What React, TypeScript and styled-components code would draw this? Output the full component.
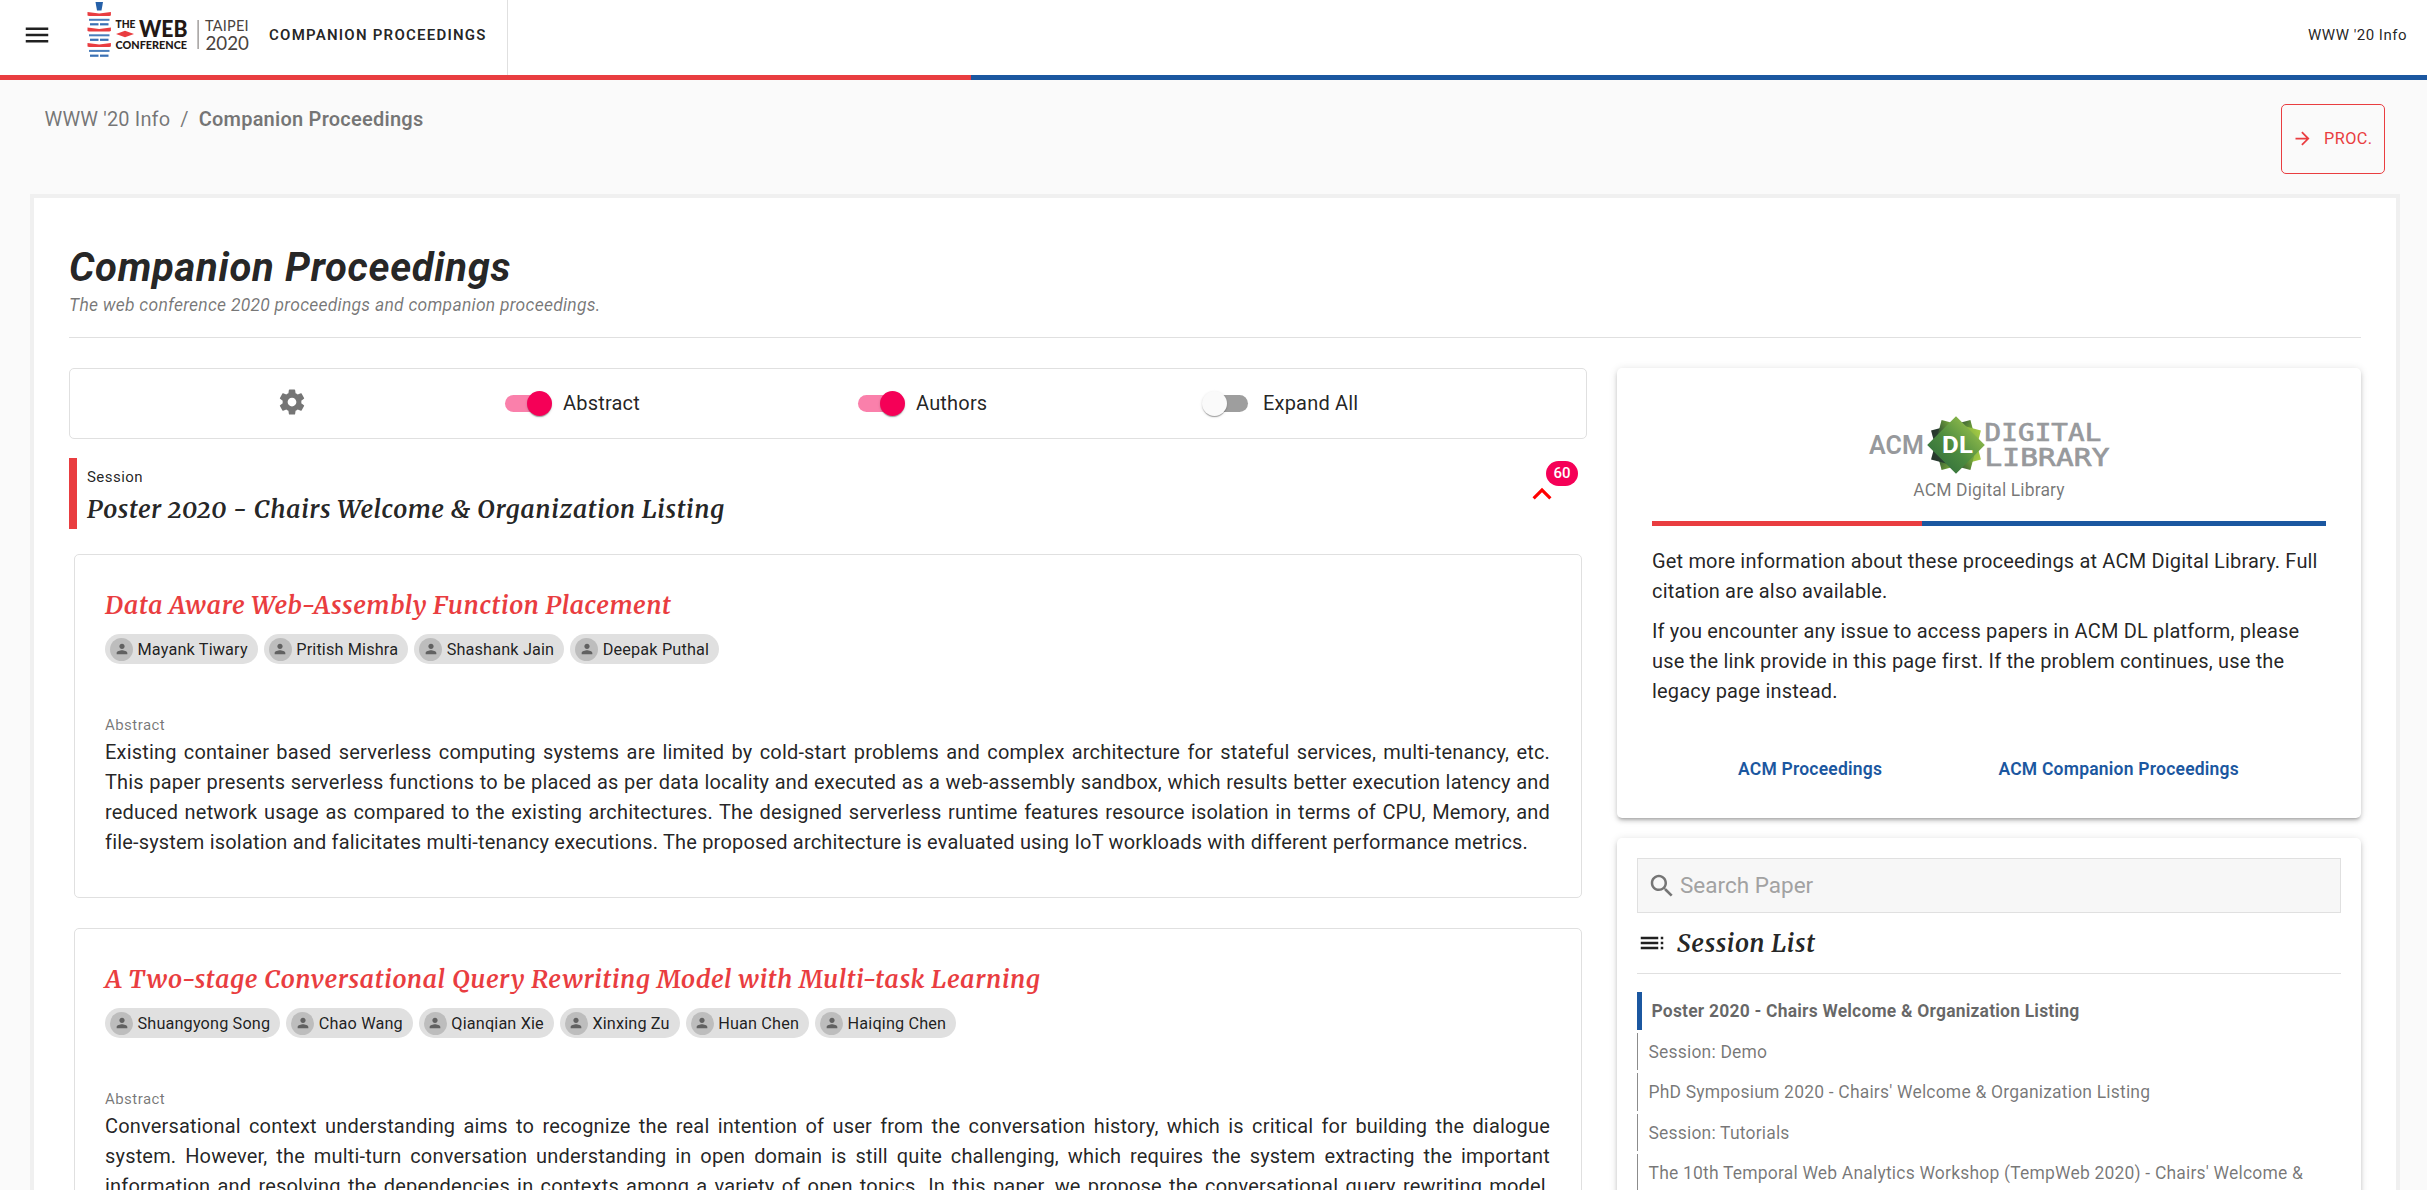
import React from 'react';
import styled, { createGlobalStyle, css } from 'styled-components';

const RED = '#e93d40';
const BLUE = '#1b57a0';
const PINK = '#f50057';
const INK = 'rgba(0,0,0,0.87)';
const MUTED = 'rgba(0,0,0,0.54)';
const LINE = '#e0e0e0';
const SANS = 'Roboto, "Liberation Sans", sans-serif';
const SERIF = 'Merriweather, "DejaVu Serif Condensed", "DejaVu Serif", serif';

const Global = createGlobalStyle`
  *, *::before, *::after { box-sizing: border-box; }
  html, body { margin: 0; height: 100%; overflow: hidden; }
  body { background: #fafafa; font-family: ${SANS}; color: ${INK}; font-size: 20px; }
  h1, h2, p, ul { margin: 0; padding: 0; font-weight: 400; }
  svg { display: block; flex: none; }
`;

const Page = styled.div`
  height: 1190px;
  overflow: hidden;
`;

const Header = styled.header`
  height: 75px;
  background: #fff;
  display: flex;
  align-items: stretch;
  justify-content: space-between;
`;

const Brand = styled.div`
  display: flex;
  align-items: center;
  width: 508px;
  padding: 0 0 5px 22px;
  border-right: 1px solid ${LINE};
  white-space: nowrap;
`;

const LogoSlot = styled.div`
  width: 170px;
  height: 60px;
  margin: 0 14px 10px 33px;
`;

const BrandTitle = styled.span`
  font-size: 15px;
  font-weight: 600;
  line-height: 25px;
  letter-spacing: 1.24px;
`;

const HeaderLink = styled.a`
  font-size: 15px;
  line-height: 25px;
  letter-spacing: 0.5px;
  padding: 23px 20px 0 0;
`;

const Stripe = styled.div`
  height: 5px;
  background: linear-gradient(90deg, ${RED} 40%, ${BLUE} 40%);
`;

const Crumbs = styled.div`
  display: flex;
  justify-content: space-between;
  align-items: flex-start;
  height: 114px;
  padding: 24px 42px 0 44.5px;
`;

const CrumbTrail = styled.nav`
  display: flex;
  gap: 10px;
  line-height: 30px;
  letter-spacing: 0.15px;
  color: ${MUTED};
  b { font-weight: 600; letter-spacing: 0.23px; }
`;

const ProcButton = styled.button`
  width: 104px;
  height: 70px;
  display: flex;
  align-items: center;
  gap: 11px;
  padding: 0 0 1px 10px;
  background: transparent;
  border: 1px solid ${RED};
  border-radius: 5px;
  color: ${RED};
  font: 400 16.25px ${SANS};
  letter-spacing: 0.46px;
`;

const Sheet = styled.main`
  margin: 0 27px 0 30px;
  height: 1100px;
  background: #fff;
  border: 4px solid #f0f0f0;
  padding: 45px 35px 0;
`;

const Title = styled.h1`
  font-size: 40px;
  line-height: 50px;
  font-style: italic;
  font-weight: 700;
  letter-spacing: 0.7px;
`;

const Subtitle = styled.p`
  font-size: 17.5px;
  line-height: 25px;
  font-style: italic;
  letter-spacing: 0.25px;
  color: ${MUTED};
  height: 44px;
`;

const Rule = styled.div`
  height: 1px;
  background: ${LINE};
`;

const Columns = styled.div`
  display: flex;
  justify-content: space-between;
  padding-top: 30px;
`;

const MainColumn = styled.section`
  width: 1518px;
`;

const SideColumn = styled.aside`
  width: 744px;
  display: flex;
  flex-direction: column;
  gap: 20px;
`;

const Toolbar = styled.div`
  display: grid;
  grid-template-columns: 433px 353px 347px 1fr;
  align-items: center;
  height: 71px;
  border: 1px solid ${LINE};
  border-radius: 5px;
`;

const GearSlot = styled.div`
  padding: 0 0 4px 207px;
`;

const Option = styled.label`
  display: flex;
  align-items: center;
  gap: 11px;
  line-height: 30px;
  letter-spacing: 0.19px;
`;

const OptionText = styled.span`
  padding-bottom: 2px;
`;

const Track = styled.span<{ $on: boolean }>`
  display: flex;
  align-items: center;
  width: 43px;
  height: 17px;
  margin: 0 4px 0 2px;
  border-radius: 9px;
  background: ${p => (p.$on ? '#fa80ab' : '#9e9e9e')};
`;

const Thumb = styled.span<{ $on: boolean }>`
  flex: none;
  width: 25px;
  height: 25px;
  border-radius: 50%;
  margin-left: ${p => (p.$on ? '22px' : '-3px')};
  background: ${p => (p.$on ? PINK : '#fafafa')};
  box-shadow: 0 2px 1px -1px rgba(0,0,0,.2), 0 1px 1px rgba(0,0,0,.14), 0 1px 3px rgba(0,0,0,.12);
`;

const SessionHead = styled.div`
  display: flex;
  justify-content: space-between;
  height: 71px;
  margin: 19px 0 25px;
  padding: 6px 0 0 10px;
  border-left: 8px solid ${RED};
`;

const Overline = styled.div<{ $muted?: boolean }>`
  font-size: 15px;
  line-height: 26px;
  letter-spacing: 0.45px;
  ${p => p.$muted && css`color: ${MUTED}; line-height: 23px;`}
`;

const SerifHeading = styled.h2<{ $red?: boolean }>`
  font-family: ${SERIF};
  font-style: italic;
  font-weight: 600;
  font-size: 25px;
  line-height: 38px;
  font-variant-numeric: oldstyle-nums;
  white-space: nowrap;
  letter-spacing: 0.58px;
  ${p => p.$red && css`color: ${RED};`}
`;

const CountToggle = styled.div`
  position: relative;
  width: 38px;
  height: 38px;
  margin: 11px 26px 0 0;
`;

const Badge = styled.span`
  position: absolute;
  left: 23px;
  top: -14px;
  width: 32px;
  height: 25px;
  border-radius: 13px;
  background: ${PINK};
  color: #fff;
  font-size: 15px;
  font-weight: 500;
  line-height: 25px;
  text-align: center;
`;

const PaperCard = styled.article`
  height: 344px;
  margin: 0 5px 30px;
  padding: 31px 30px 0;
  border: 1px solid ${LINE};
  border-radius: 5px;
`;

const Chips = styled.div`
  display: flex;
  gap: 6px;
  margin: 10px 0 50px;
`;

const Chip = styled.span`
  display: flex;
  align-items: center;
  height: 30px;
  padding: 0 10px 0 5px;
  border-radius: 15px;
  background: #e0e0e0;
  font-size: 16.25px;
  letter-spacing: 0.15px;
  white-space: nowrap;
`;

const Avatar = styled.span`
  width: 23px;
  height: 23px;
  margin-right: 4.5px;
  border-radius: 50%;
  background: #bdbdbd;
  display: flex;
  align-items: center;
  justify-content: center;
`;

const Abstract = styled.p<{ $continues?: boolean }>`
  width: 1445px;
  line-height: 30px;
  letter-spacing: 0.18px;
  text-align: justify;
  ${p => p.$continues && css`text-align-last: justify;`}
`;

const Raised = styled.section<{ $h: number; $pad: string }>`
  height: ${p => p.$h}px;
  padding: ${p => p.$pad};
  background: #fff;
  border-radius: 5px;
  box-shadow: 0 3px 3px -2px rgba(0,0,0,.2), 0 3px 4px rgba(0,0,0,.14), 0 1px 8px rgba(0,0,0,.12);
`;

const LibraryHead = styled.div`
  display: flex;
  flex-direction: column;
  align-items: center;
  gap: 3px;
  height: 106px;
  color: ${MUTED};
  font-size: 17.5px;
  line-height: 25px;
  letter-spacing: 0.13px;
`;

const Notes = styled.div`
  display: flex;
  flex-direction: column;
  gap: 10px;
  padding-top: 20px;
`;

const Copy = styled.p`
  line-height: 30px;
  letter-spacing: 0.17px;
  white-space: nowrap;
`;

const LinkRow = styled.div`
  display: flex;
  justify-content: space-between;
  padding: 51px 87px 0 86px;
  color: ${BLUE};
  font-size: 17.5px;
  font-weight: 600;
  line-height: 25px;
  letter-spacing: 0.22px;
`;

const SearchBox = styled.div`
  display: flex;
  align-items: center;
  gap: 3px;
  height: 55px;
  padding-left: 9px;
  background: #f7f7f7;
  border: 1px solid ${LINE};
  color: #a2a2a2;
  font-size: 22.5px;
`;

const SearchHint = styled.span`
  padding-bottom: 2px;
`;

const ListHead = styled.div`
  display: flex;
  align-items: center;
  gap: 10px;
  height: 60px;
`;

const SessionList = styled.ul`
  list-style: none;
  display: flex;
  flex-direction: column;
  gap: 3px;
  padding-top: 18px;
`;

const SessionItem = styled.li<{ $active?: boolean }>`
  height: 37.5px;
  flex: none;
  padding: 7px 0 0 10.5px;
  border-left: 1px solid #8c8c8c;
  color: ${MUTED};
  font-size: 17.5px;
  line-height: 25px;
  letter-spacing: 0.19px;
  white-space: nowrap;
  ${p => p.$active && css`
    border-left: 5px solid ${BLUE};
    padding-left: 9.5px;
    font-weight: 700;
    color: rgba(0,0,0,0.6);
  `}
`;

const Icon = ({ d, size, color = 'currentColor' }: { d: string; size: number; color?: string }) => (
  <svg width={size} height={size} viewBox="0 0 24 24" fill={color}><path d={d} /></svg>
);

const ICONS = {
  menu: 'M3 18h18v-2H3v2zm0-5h18v-2H3v2zm0-7v2h18V6H3z',
  arrow: 'M12 4l-1.41 1.41L16.17 11H4v2h12.17l-5.58 5.59L12 20l8-8z',
  gear: 'M19.43 12.98c.04-.32.07-.64.07-.98s-.03-.66-.07-.98l2.11-1.65c.19-.15.24-.42.12-.64l-2-3.46c-.12-.22-.39-.3-.61-.22l-2.49 1c-.52-.4-1.08-.73-1.69-.98l-.38-2.65C14.46 2.18 14.25 2 14 2h-4c-.25 0-.46.18-.49.42l-.38 2.65c-.61.25-1.17.59-1.69.98l-2.49-1c-.23-.09-.49 0-.61.22l-2 3.46c-.13.22-.07.49.12.64l2.11 1.65c-.04.32-.07.65-.07.98s.03.66.07.98l-2.11 1.65c-.19.15-.24.42-.12.64l2 3.46c.12.22.39.3.61.22l2.49-1c.52.4 1.08.73 1.69.98l.38 2.65c.03.24.24.42.49.42h4c.25 0 .46-.18.49-.42l.38-2.65c.61-.25 1.17-.59 1.69-.98l2.49 1c.23.09.49 0 .61-.22l2-3.46c.12-.22.07-.49-.12-.64l-2.11-1.65zM12 15.5c-1.93 0-3.5-1.57-3.5-3.5s1.57-3.5 3.5-3.5 3.5 1.57 3.5 3.5-1.57 3.5-3.5 3.5z',
  up: 'M12 8l-6 6 1.41 1.41L12 10.83l4.59 4.58L18 14z',
  person: 'M12 12c2.21 0 4-1.79 4-4s-1.79-4-4-4-4 1.79-4 4 1.79 4 4 4zm0 2c-2.67 0-8 1.34-8 4v2h16v-2c0-2.66-5.33-4-8-4z',
  search: 'M15.5 14h-.79l-.28-.27C15.41 12.59 16 11.11 16 9.5 16 5.91 13.09 3 9.5 3S3 5.91 3 9.5 5.91 16 9.5 16c1.61 0 3.09-.59 4.23-1.57l.27.28v.79l5 4.99L20.49 19l-4.99-5zm-6 0C7.01 14 5 11.99 5 9.5S7.01 5 9.5 5 14 7.01 14 9.5 11.99 14 9.5 14z',
  toc: 'M3 9h14V7H3v2zm0 4h14v-2H3v2zm0 4h14v-2H3v2zm16 0h2v-2h-2v2zm0-10v2h2V7h-2zm0 6h2v-2h-2v2z',
};

const WebConfLogo = () => (
  <svg width="170" height="60" viewBox="0 0 170 60">
    <path d="M10.5 2h7.5l-1.5 8.500h-4.500z" fill="#2560a8" />
    {[12, 27.500, 43].map(y => (
      <path key={y} d={`M2.500 ${y}l11.700 1.500l11.700 -1.500v3.500l-1.500 .5h-20.400l-1.500 -.5z`} fill={RED} />
    ))}
    {[18.800, 34.300, 49.900].map(y => (
      <rect key={y} x="4" y={y} width="20.500" height="2" fill="#4a7dbb" />
    ))}
    {[23.200, 38.700, 54.600].map(y => (
      <g key={y} fill="#3a70b4"><rect x="5" y={y} width="8.500" height="2.200" /><rect x="15" y={y} width="8.500" height="2.200" /></g>
    ))}
    <path d="M31 34l9-3.300 9 3.300-9 3.300z" fill={RED} />
    <g fill="#231815" fontFamily="Lato, sans-serif" fontWeight="900">
      <text x="30.500" y="28" fontSize="10.500" textLength="20" lengthAdjust="spacingAndGlyphs">THE</text>
      <text x="54" y="36.500" fontSize="22.500" textLength="48.500" lengthAdjust="spacingAndGlyphs">WEB</text>
      <text x="30.500" y="48.700" fontSize="11" textLength="71.500" lengthAdjust="spacingAndGlyphs">CONFERENCE</text>
    </g>
    <rect x="112.500" y="20" width="1.200" height="29" fill="#8b8785" />
    <g fill="#4a4340" fontFamily="Lato, sans-serif">
      <text x="120" y="30.700" fontSize="14.500" textLength="43.500" lengthAdjust="spacing">TAIPEI</text>
      <text x="120.500" y="50" fontSize="19.500" textLength="43.500" lengthAdjust="spacingAndGlyphs">2020</text>
    </g>
  </svg>
);

const star = (angle: number) => `rotate(${angle} 88 30)`;

const AcmLogo = () => (
  <svg width="243" height="60" viewBox="0 0 243 60">
    <defs>
      <linearGradient id="acmFront" x1="0" y1="1" x2="1" y2="0">
        <stop offset="0.1" stopColor="#2f6b3c" /><stop offset="0.45" stopColor="#4b8a3f" /><stop offset="1" stopColor="#b2d250" />
      </linearGradient>
      <linearGradient id="acmBack" gradientUnits="userSpaceOnUse" x1="60" y1="0" x2="116" y2="0">
        <stop offset="0" stopColor="#26352c" /><stop offset="0.3" stopColor="#2b4a33" /><stop offset="0.6" stopColor="#6fa03a" /><stop offset="1" stopColor="#a5cb45" />
      </linearGradient>
    </defs>
    <g fill="url(#acmBack)">
      <path d="M88 1.200L116.800 30L88 58.800L59.200 30z" transform={star(30)} />
      <path d="M88 1.200L116.800 30L88 58.800L59.200 30z" transform={star(-30)} />
    </g>
    <path d="M88 1.200L116.800 30L88 58.800L59.200 30z" fill="url(#acmFront)" />
    <g fill="#97999c" fontFamily="Roboto, sans-serif" fontWeight="600">
      <text x="1" y="38.800" fontSize="25.500" textLength="55" lengthAdjust="spacingAndGlyphs">ACM</text>
    </g>
    <text x="74" y="38" fill="#fff" fontFamily="Roboto, sans-serif" fontWeight="700" fontSize="23" textLength="31" lengthAdjust="spacingAndGlyphs">DL</text>
    <g fill="#97999c" stroke="#97999c" strokeWidth="0.700" fontFamily="DejaVu Sans Mono, monospace" fontSize="24">
      <text x="116.500" y="25.800" textLength="117" lengthAdjust="spacingAndGlyphs">DIGITAL</text>
      <text x="116.500" y="50.800" textLength="125" lengthAdjust="spacingAndGlyphs">LIBRARY</text>
    </g>
  </svg>
);

const Switch = ({ on, label }: { on: boolean; label: string }) => (
  <Option><Track $on={on}><Thumb $on={on} /></Track><OptionText>{label}</OptionText></Option>
);

const Paper = ({ title, authors, text, continues }: { title: string; authors: string[]; text: string; continues?: boolean }) => (
  <PaperCard>
    <SerifHeading $red>{title}</SerifHeading>
    <Chips>
      {authors.map(a => (
        <Chip key={a}><Avatar><Icon d={ICONS.person} size={16} color="#616161" /></Avatar>{a}</Chip>
      ))}
    </Chips>
    <Overline $muted>Abstract</Overline>
    <Abstract $continues={continues}>{text}</Abstract>
  </PaperCard>
);

const sessions = [
  'Poster 2020 - Chairs Welcome & Organization Listing',
  'Session: Demo',
  "PhD Symposium 2020 - Chairs' Welcome & Organization Listing",
  'Session: Tutorials',
  "The 10th Temporal Web Analytics Workshop (TempWeb 2020) - Chairs' Welcome &",
];

export default function App() {
  return (
    <Page>
      <Global />
      <Header>
        <Brand>
          <Icon d={ICONS.menu} size={30} />
          <LogoSlot><WebConfLogo /></LogoSlot>
          <BrandTitle>COMPANION PROCEEDINGS</BrandTitle>
        </Brand>
        <HeaderLink>WWW '20 Info</HeaderLink>
      </Header>
      <Stripe />
      <Crumbs>
        <CrumbTrail><span>WWW '20 Info</span><span>/</span><b>Companion Proceedings</b></CrumbTrail>
        <ProcButton><Icon d={ICONS.arrow} size={21} />PROC.</ProcButton>
      </Crumbs>
      <Sheet>
        <Title>Companion Proceedings</Title>
        <Subtitle>The web conference 2020 proceedings and companion proceedings.</Subtitle>
        <Rule />
        <Columns>
          <MainColumn>
            <Toolbar>
              <GearSlot><Icon d={ICONS.gear} size={30} color="#757575" /></GearSlot>
              <Switch on label="Abstract" />
              <Switch on label="Authors" />
              <Switch on={false} label="Expand All" />
            </Toolbar>
            <SessionHead>
              <div>
                <Overline>Session</Overline>
                <SerifHeading>Poster 2020 - Chairs Welcome &amp; Organization Listing</SerifHeading>
              </div>
              <CountToggle>
                <Icon d={ICONS.up} size={38} color="#f00" />
                <Badge>60</Badge>
              </CountToggle>
            </SessionHead>
            <Paper
              title="Data Aware Web-Assembly Function Placement"
              authors={['Mayank Tiwary', 'Pritish Mishra', 'Shashank Jain', 'Deepak Puthal']}
              text="Existing container based serverless computing systems are limited by cold-start problems and complex architecture for stateful services, multi-tenancy, etc. This paper presents serverless functions to be placed as per data locality and executed as a web-assembly sandbox, which results better execution latency and reduced network usage as compared to the existing architectures. The designed serverless runtime features resource isolation in terms of CPU, Memory, and file-system isolation and falicitates multi-tenancy executions. The proposed architecture is evaluated using IoT workloads with different performance metrics."
            />
            <Paper
              title="A Two-stage Conversational Query Rewriting Model with Multi-task Learning"
              authors={['Shuangyong Song', 'Chao Wang', 'Qianqian Xie', 'Xinxing Zu', 'Huan Chen', 'Haiqing Chen']}
              continues
              text="Conversational context understanding aims to recognize the real intention of user from the conversation history, which is critical for building the dialogue system. However, the multi-turn conversation understanding in open domain is still quite challenging, which requires the system extracting the important information and resolving the dependencies in contexts among a variety of open topics. In this paper, we propose the conversational query rewriting model,"
            />
          </MainColumn>
          <SideColumn>
            <Raised $h={450} $pad="47px 35px 0">
              <LibraryHead><AcmLogo /><span>ACM Digital Library</span></LibraryHead>
              <Stripe />
              <Notes>
                <Copy>Get more information about these proceedings at ACM Digital Library. Full<br />citation are also available.</Copy>
                <Copy>If you encounter any issue to access papers in ACM DL platform, please<br />use the link provide in this page first. If the problem continues, use the<br />legacy page instead.</Copy>
              </Notes>
              <LinkRow><span>ACM Proceedings</span><span>ACM Companion Proceedings</span></LinkRow>
            </Raised>
            <Raised $h={420} $pad="20px 20px 0">
              <SearchBox><Icon d={ICONS.search} size={30} color="#757575" /><SearchHint>Search Paper</SearchHint></SearchBox>
              <ListHead><Icon d={ICONS.toc} size={30} /><SerifHeading>Session List</SerifHeading></ListHead>
              <Rule />
              <SessionList>
                {sessions.map((s, i) => <SessionItem key={s} $active={i === 0}>{s}</SessionItem>)}
              </SessionList>
            </Raised>
          </SideColumn>
        </Columns>
      </Sheet>
    </Page>
  );
}
